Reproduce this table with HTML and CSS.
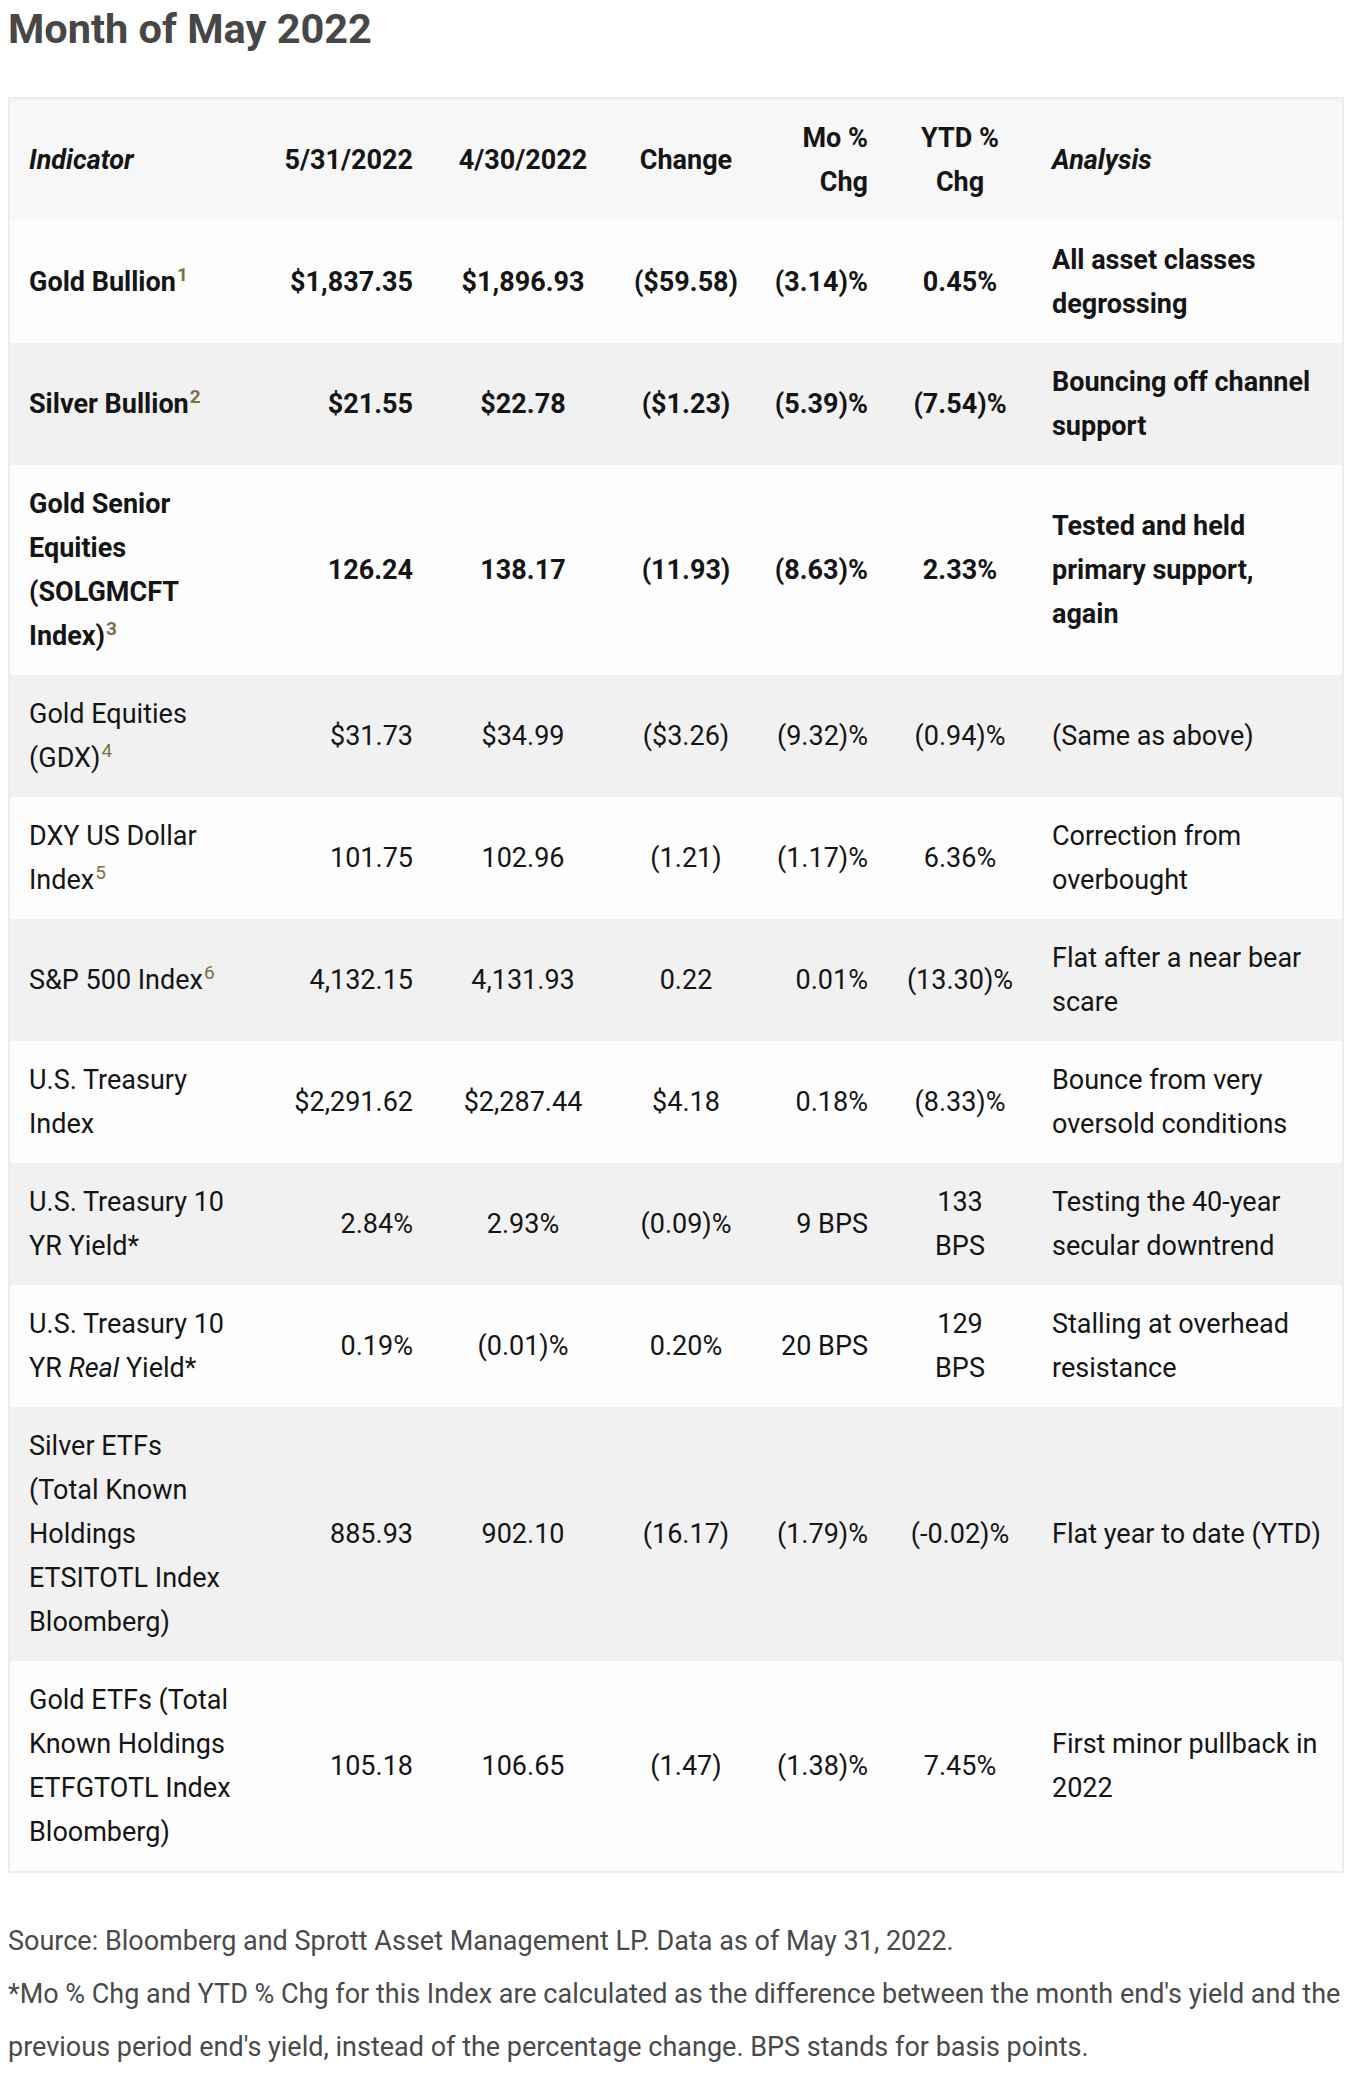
FILE: index.html
```html
<!DOCTYPE html>
<html lang="en">
<head>
<meta charset="utf-8">
<title>Month of May 2022</title>
<link rel="stylesheet" href="styles.css">
</head>
<body>
<main class="page">
  <h2 class="title">Month of May 2022</h2>
  <table class="indicators">
    <colgroup>
      <col class="col-ind"><col class="col-cur"><col class="col-prev"><col class="col-chg"><col class="col-mo"><col class="col-ytd"><col class="col-an">
    </colgroup>
    <thead>
      <tr>
        <th class="it">Indicator</th>
        <th>5/31/2022</th>
        <th>4/30/2022</th>
        <th>Change</th>
        <th>Mo %<br>Chg</th>
        <th>YTD %<br>Chg</th>
        <th class="it">Analysis</th>
      </tr>
    </thead>
    <tbody>
      <tr class="strong">
        <td>Gold Bullion<sup>1</sup></td><td>$1,837.35</td><td>$1,896.93</td><td>($59.58)</td><td>(3.14)%</td><td>0.45%</td><td>All asset classes<br>degrossing</td>
      </tr>
      <tr class="strong">
        <td>Silver Bullion<sup>2</sup></td><td>$21.55</td><td>$22.78</td><td>($1.23)</td><td>(5.39)%</td><td>(7.54)%</td><td>Bouncing off channel<br>support</td>
      </tr>
      <tr class="strong">
        <td>Gold Senior<br>Equities<br>(SOLGMCFT<br>Index)<sup>3</sup></td><td>126.24</td><td>138.17</td><td>(11.93)</td><td>(8.63)%</td><td>2.33%</td><td>Tested and held<br>primary support,<br>again</td>
      </tr>
      <tr>
        <td>Gold Equities<br>(GDX)<sup>4</sup></td><td>$31.73</td><td>$34.99</td><td>($3.26)</td><td>(9.32)%</td><td>(0.94)%</td><td>(Same as above)</td>
      </tr>
      <tr>
        <td>DXY US Dollar<br>Index<sup>5</sup></td><td>101.75</td><td>102.96</td><td>(1.21)</td><td>(1.17)%</td><td>6.36%</td><td>Correction from<br>overbought</td>
      </tr>
      <tr>
        <td>S&amp;P 500 Index<sup>6</sup></td><td>4,132.15</td><td>4,131.93</td><td>0.22</td><td>0.01%</td><td>(13.30)%</td><td>Flat after a near bear<br>scare</td>
      </tr>
      <tr>
        <td>U.S. Treasury<br>Index</td><td>$2,291.62</td><td>$2,287.44</td><td>$4.18</td><td>0.18%</td><td>(8.33)%</td><td>Bounce from very<br>oversold conditions</td>
      </tr>
      <tr>
        <td>U.S. Treasury 10<br>YR Yield*</td><td>2.84%</td><td>2.93%</td><td>(0.09)%</td><td>9 BPS</td><td>133<br>BPS</td><td>Testing the 40-year<br>secular downtrend</td>
      </tr>
      <tr>
        <td>U.S. Treasury 10<br>YR <em>Real</em> Yield*</td><td>0.19%</td><td>(0.01)%</td><td>0.20%</td><td>20 BPS</td><td>129<br>BPS</td><td>Stalling at overhead<br>resistance</td>
      </tr>
      <tr>
        <td>Silver ETFs<br>(Total Known<br>Holdings<br>ETSITOTL Index<br>Bloomberg)</td><td>885.93</td><td>902.10</td><td>(16.17)</td><td>(1.79)%</td><td>(-0.02)%</td><td>Flat year to date (YTD)</td>
      </tr>
      <tr>
        <td>Gold ETFs (Total<br>Known Holdings<br>ETFGTOTL Index<br>Bloomberg)</td><td>105.18</td><td>106.65</td><td>(1.47)</td><td>(1.38)%</td><td>7.45%</td><td>First minor pullback in<br>2022</td>
      </tr>
    </tbody>
  </table>
  <div class="notes">
    <p>Source: Bloomberg and Sprott Asset Management LP. Data as of May 31, 2022.</p>
    <p>*Mo % Chg and YTD % Chg for this Index are calculated as the difference between the month end's yield and the previous period end's yield, instead of the percentage change. BPS stands for basis points.</p>
  </div>
</main>
</body>
</html>
```

FILE: styles.css
```css
html, body {
  margin: 0;
  padding: 0;
  background: #ffffff;
}

.page {
  padding: 0 8px;
  font-family: Roboto, "Liberation Sans", Arial, sans-serif;
  color: #151515;
}

.title {
  margin: 4px 0 0;
  font-size: 41.5px;
  line-height: 50px;
  font-weight: 700;
  color: #474747;
}

.indicators {
  margin-top: 43px;
  width: 1336px;
  table-layout: fixed;
  border-collapse: separate;
  border-spacing: 0;
  border: 2px solid #ececec;
  font-size: 27px;
  line-height: 44px;
}

.col-ind { width: 240px; }
.col-cur { width: 171px; }
.col-prev { width: 204px; }
.col-chg { width: 122px; }
.col-mo { width: 129px; }
.col-ytd { width: 168px; }
.col-an { width: 298px; }

.indicators th,
.indicators td {
  padding: 17px 8px;
  vertical-align: middle;
  font-weight: 400;
}

.indicators th {
  font-weight: 700;
  background: #f7f7f7;
}

.indicators th.it {
  font-style: italic;
}

.indicators th:nth-child(1),
.indicators td:nth-child(1) {
  padding-left: 19px;
  text-align: left;
}

.indicators th:nth-child(2),
.indicators td:nth-child(2),
.indicators th:nth-child(5),
.indicators td:nth-child(5) {
  text-align: right;
}

.indicators th:nth-child(3),
.indicators td:nth-child(3),
.indicators th:nth-child(4),
.indicators td:nth-child(4),
.indicators th:nth-child(6),
.indicators td:nth-child(6) {
  text-align: center;
}

.indicators th:nth-child(7),
.indicators td:nth-child(7) {
  text-align: left;
}

.indicators tbody tr:nth-child(odd) td {
  background: #fdfdfd;
}

.indicators tbody tr:nth-child(even) td {
  background: #f1f1f1;
}

.indicators tr.strong td {
  font-weight: 700;
}

.indicators sup {
  font-size: 19px;
  line-height: 0;
  vertical-align: 0;
  position: relative;
  top: -10px;
  margin-left: 1px;
  color: #7d6e42;
}

.notes {
  margin-top: 42px;
  color: #4a4a4a;
  font-size: 27px;
  line-height: 53px;
}

.notes p {
  margin: 0;
}
```
